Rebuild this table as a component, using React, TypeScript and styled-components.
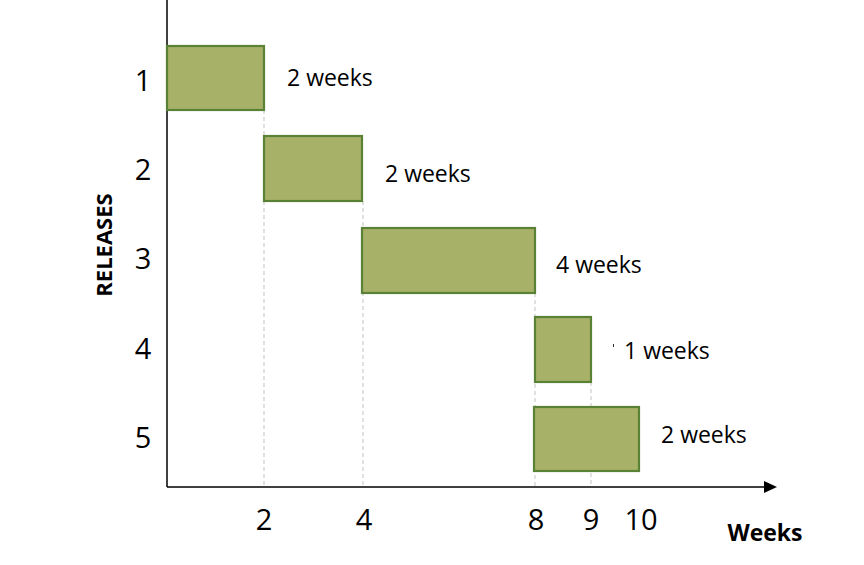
import styled, { createGlobalStyle } from "styled-components";

const GlobalStyle = createGlobalStyle`
  html, body {
    margin: 0;
    padding: 0;
    background: #ffffff;
  }
`;

type Release = {
  id: number;
  x1: number;
  x2: number;
  y1: number;
  y2: number;
  label: string;
  labelX: number;
  labelY: number;
  rowY: number;
};

const releases: Release[] = [
  { id: 1, x1: 167, x2: 264, y1: 46, y2: 110, label: "2 weeks", labelX: 287, labelY: 86, rowY: 91 },
  { id: 2, x1: 264, x2: 362, y1: 136, y2: 201, label: "2 weeks", labelX: 385, labelY: 182, rowY: 180 },
  { id: 3, x1: 362, x2: 535, y1: 228, y2: 293, label: "4 weeks", labelX: 556, labelY: 273, rowY: 269 },
  { id: 4, x1: 535, x2: 591, y1: 317, y2: 382, label: "1 weeks", labelX: 624, labelY: 359, rowY: 359 },
  { id: 5, x1: 534, x2: 639, y1: 407, y2: 471, label: "2 weeks", labelX: 661, labelY: 443, rowY: 448 },
];

// dashed guides dropping from each bar's end to the x axis
const guides = [
  { x: 264, from: 110 },
  { x: 363, from: 201 },
  { x: 535, from: 293 },
  { x: 591, from: 382 },
];

const ticks = [
  { x: 264, text: "2" },
  { x: 364, text: "4" },
  { x: 536, text: "8" },
  { x: 591, text: "9" },
  { x: 641, text: "10" },
];

const AXIS_Y = 487;
const AXIS_X = 167;

export default function App() {
  return (
    <>
      <GlobalStyle />
      <Figure>
        <Chart viewBox="0 0 864 565" width={864} height={565}>
          {guides.map((g) => (
            <Guide key={g.x} x1={g.x} x2={g.x} y1={g.from} y2={AXIS_Y} />
          ))}

          <Axis x1={AXIS_X} x2={AXIS_X} y1={0} y2={AXIS_Y} />
          <Axis x1={AXIS_X} x2={766} y1={AXIS_Y} y2={AXIS_Y} />
          <Arrow points={`764,${AXIS_Y - 6} 777,${AXIS_Y} 764,${AXIS_Y + 6}`} />

          {releases.map((r) => (
            <g key={r.id}>
              <Bar x={r.x1} y={r.y1} width={r.x2 - r.x1} height={r.y2 - r.y1} />
              <RowLabel x={143} y={r.rowY}>
                {r.id}
              </RowLabel>
              <Duration x={r.labelX} y={r.labelY}>
                {r.label}
              </Duration>
            </g>
          ))}

          <Speck x={613} y={344} width={1} height={3} />

          {ticks.map((t) => (
            <TickLabel key={t.text} x={t.x} y={530}>
              {t.text}
            </TickLabel>
          ))}

          <AxisTitle $size={22} x={0} y={0} transform="translate(112 245) rotate(-90)">
            RELEASES
          </AxisTitle>
          <AxisTitle $size={23} x={765} y={541}>
            Weeks
          </AxisTitle>
        </Chart>
      </Figure>
    </>
  );
}

const Figure = styled.div`
  width: 864px;
  height: 565px;
  background: #ffffff;
  overflow: hidden;
`;

const Chart = styled.svg`
  display: block;
  font-family: "Open Sans", "Noto Sans", sans-serif;
`;

const Axis = styled.line`
  stroke: #000000;
  stroke-width: 1.5;
`;

const Arrow = styled.polygon`
  fill: #000000;
`;

const Guide = styled.line`
  stroke: #c3c3c3;
  stroke-width: 1;
  stroke-dasharray: 4 3;
`;

const Bar = styled.rect`
  fill: #a8b168;
  stroke: #5a8236;
  stroke-width: 2.2;
`;

const Speck = styled.rect`
  fill: #333333;
`;

const RowLabel = styled.text`
  font-size: 29px;
  fill: #000000;
  text-anchor: middle;
`;

const TickLabel = styled.text`
  font-size: 29px;
  fill: #000000;
  text-anchor: middle;
`;

const Duration = styled.text`
  font-size: 23px;
  fill: #000000;
`;

const AxisTitle = styled.text<{ $size: number }>`
  font-size: ${(p) => p.$size}px;
  font-weight: 700;
  fill: #000000;
  text-anchor: middle;
`;
